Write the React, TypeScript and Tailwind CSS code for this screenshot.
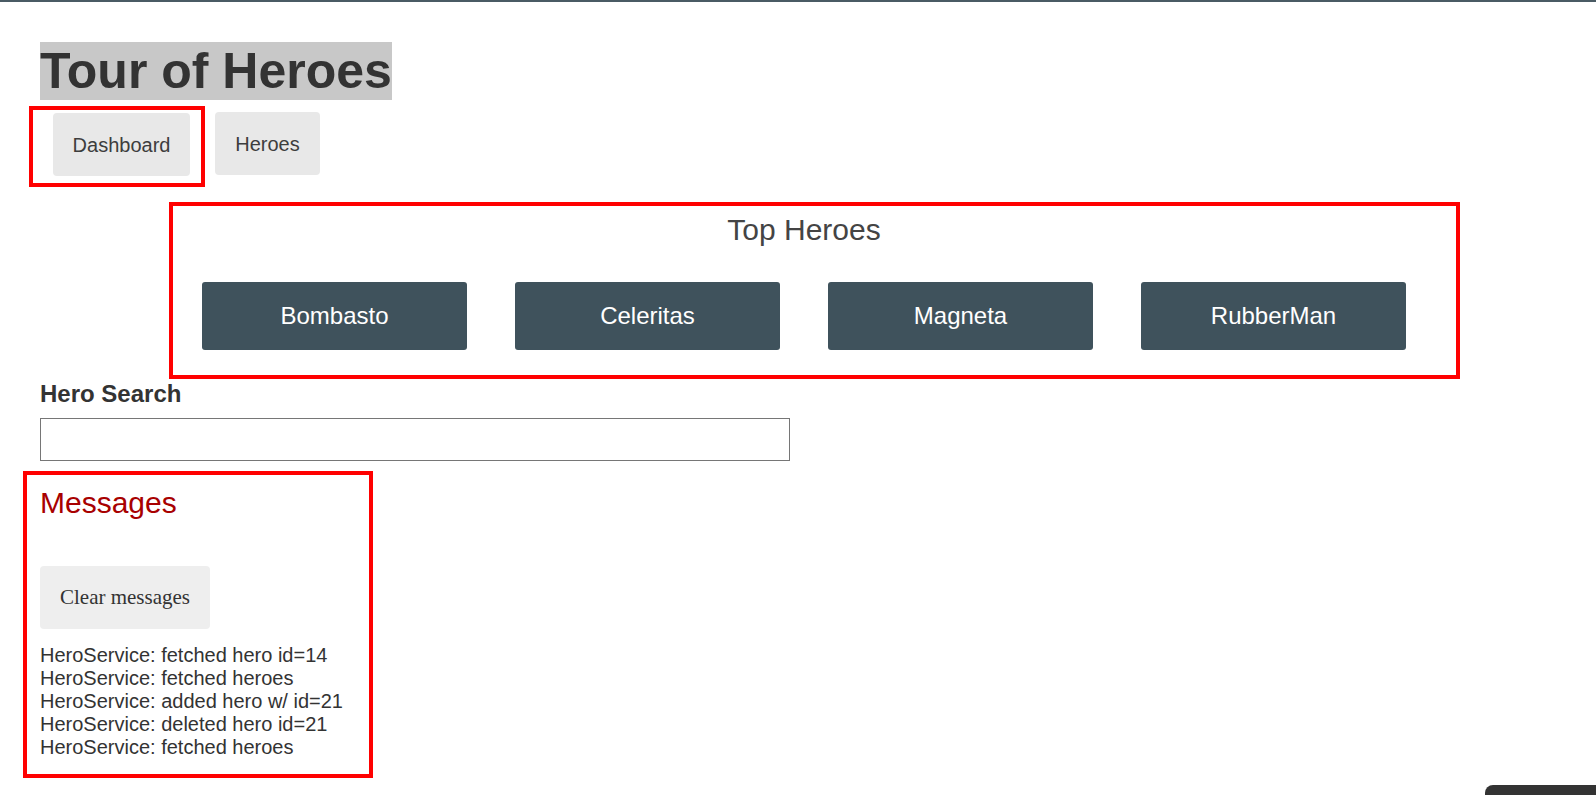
import React from "react";

const heroes = ["Bombasto", "Celeritas", "Magneta", "RubberMan"];
const messages = [
  "HeroService: fetched hero id=14",
  "HeroService: fetched heroes",
  "HeroService: added hero w/ id=21",
  "HeroService: deleted hero id=21",
  "HeroService: fetched heroes",
];

export default function App() {
  return (
    <div
      className="relative h-[795px] overflow-hidden bg-white text-[#333]"
      style={{ fontFamily: '"Liberation Sans", Arial, sans-serif' }}
    >
      <div className="h-[2px] bg-[#4a5b64]" />
      <div className="pl-[40px] pt-[40px]">
        <h1 className="inline-block bg-[#c8c8c8] text-[50px] font-bold leading-[58px] text-[#333]">
          Tour of Heroes
        </h1>

        <nav className="mt-[6px] flex items-start">
          <div className="ml-[-11px] border-[4px] border-[#ff0000] pl-[20px] pr-[11px] pt-[3px] pb-[7px]">
            <a className="flex h-[63px] w-[137px] items-center justify-center rounded-[4px] bg-[#e8e8e8] text-[20px] text-[#3d3d3d]">
              Dashboard
            </a>
          </div>
          <a className="ml-[10px] mt-[6px] flex h-[63px] w-[105px] items-center justify-center rounded-[4px] bg-[#e8e8e8] text-[20px] text-[#3d3d3d]">
            Heroes
          </a>
        </nav>

        <section className="ml-[129px] mt-[15px] w-[1291px] border-[4px] border-[#ff0000] pl-[29px] pt-[7px] pb-[25px]">
          <div className="w-[1204px]">
            <h2 className="text-center text-[30px] leading-[34px] text-[#444]">Top Heroes</h2>
            <div className="mt-[35px] flex gap-[48px]">
              {heroes.map((h) => (
                <a
                  key={h}
                  className="flex h-[68px] w-[265px] items-center justify-center rounded-[3px] bg-[#3f525c] text-[24px] text-white"
                >
                  {h}
                </a>
              ))}
            </div>
          </div>
        </section>

        <div className="mt-[1px]">
          <label className="block text-[24px] font-bold leading-[28px] text-[#333]">Hero Search</label>
          <input
            type="text"
            className="mt-[10px] block h-[43px] w-[750px] border border-[#767676] bg-white px-[10px]"
          />
        </div>

        <div className="ml-[-17px] mt-[10px] w-[350px] border-[4px] border-[#ff0000] pl-[13px] pt-[11px] pb-[15px]">
          <h2 className="text-[30px] leading-[34px] text-[#a80000]">Messages</h2>
          <button
            className="mt-[46px] flex h-[63px] w-[170px] items-center justify-center rounded-[4px] bg-[#eeeeee] text-[21px] text-[#333]"
            style={{ fontFamily: '"Liberation Serif", "Times New Roman", serif' }}
          >
            Clear messages
          </button>
          <div className="mt-[15px]">
            {messages.map((m, i) => (
              <div key={i} className="text-[20px] leading-[23px] text-[#333]">
                {m}
              </div>
            ))}
          </div>
        </div>
      </div>

      <div className="absolute left-[1485px] top-[785px] h-[30px] w-[140px] rounded-[8px] bg-[#333]" />
    </div>
  );
}
